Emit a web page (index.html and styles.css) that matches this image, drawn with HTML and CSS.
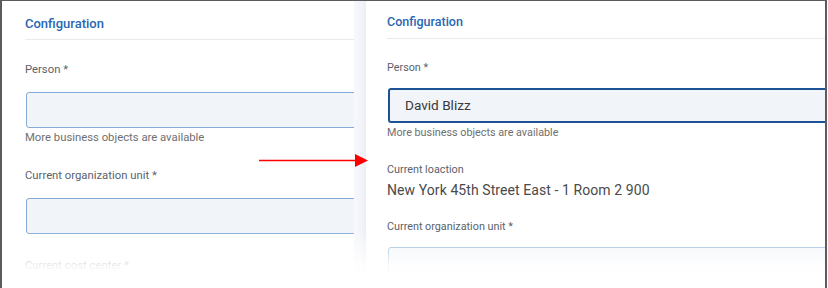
FILE: index.html
```html
<!DOCTYPE html>
<html lang="en">
<head>
<meta charset="utf-8">
<title>Configuration</title>
<link rel="stylesheet" href="styles.css">
</head>
<body>
<div class="frame">
  <section class="panel panel-left">
    <h2 class="title">Configuration</h2>
    <div class="field">
      <label class="label">Person *</label>
      <div class="input"></div>
      <div class="help">More business objects are available</div>
    </div>
    <div class="field">
      <label class="label">Current organization unit *</label>
      <div class="input"></div>
    </div>
    <div class="field">
      <label class="label">Current cost center *</label>
    </div>
  </section>
  <div class="gutter"></div>
  <section class="panel panel-right">
    <h2 class="title">Configuration</h2>
    <div class="field">
      <label class="label">Person *</label>
      <div class="input input-focus">David Blizz</div>
      <div class="help">More business objects are available</div>
    </div>
    <div class="field">
      <label class="label">Current loaction</label>
      <div class="value">New York 45th Street East - 1 Room 2 900</div>
    </div>
    <div class="field">
      <label class="label">Current organization unit *</label>
      <div class="input"></div>
    </div>
  </section>
  <div class="fade"></div>
  <svg class="arrow" width="110" height="14" viewBox="0 0 110 14">
    <line x1="0" y1="6.5" x2="98" y2="6.5" stroke="#ff0000" stroke-width="1.4"/>
    <polygon points="96,0 109,6.5 96,13" fill="#ff0000"/>
  </svg>
</div>
</body>
</html>
```
FILE: styles.css
```css
* { box-sizing: border-box; }
html, body { margin: 0; padding: 0; background: #ffffff; }
body { font-family: Roboto, "Liberation Sans", Arial, sans-serif; }

.frame {
  position: relative;
  display: flex;
  width: 827px;
  height: 288px;
  border-top: 1px solid #5b5b5b;
  border-left: 2px solid #5b5b5b;
  border-right: 2px solid #5b5b5b;
  overflow: hidden;
  background: #ffffff;
}

.panel {
  overflow: hidden;
  background: #ffffff;
}

.panel-left {
  width: 352px;
  flex: none;
  padding: 15px 0 0 23px;
}

.gutter {
  width: 12px;
  flex: none;
  background: linear-gradient(to right, #f7f8fc 0%, #f3f4fa 60%, #eceef6 100%);
}

.panel-right {
  flex: 1;
  padding: 13px 0 0 21px;
}

.title {
  margin: 0;
  font-size: 13px;
  line-height: 16px;
  font-weight: 500;
  color: #2867b2;
  padding-bottom: 7px;
  border-bottom: 1px solid #eaeaea;
}

.panel-left .field { margin-top: 22px; }
.panel-left .field:nth-of-type(3) { margin-top: 24px; }

.label {
  display: block;
  font-size: 11.3px;
  line-height: 16px;
  color: #5a626b;
}

.input {
  margin-top: 14px;
  height: 36px;
  width: calc(100% + 20px);
  margin-left: 1px;
  background: #f1f4f9;
  border: 1px solid #86abd6;
  border-radius: 3px;
}

.help {
  margin-top: 2px;
  font-size: 11.3px;
  line-height: 16px;
  color: #6f6f6f;
}

/* right panel, slightly smaller scale */
.panel-right .title {
  font-size: 12.5px;
  line-height: 16px;
  padding-bottom: 8px;
}
.panel-right .field { margin-top: 21px; }
.panel-right .field:nth-of-type(2) { margin-top: 22px; }
.panel-right .field:nth-of-type(3) { margin-top: 20px; }

.panel-right .label {
  font-size: 10.8px;
  line-height: 15px;
}

.panel-right .input {
  margin-top: 13px;
  height: 35px;
}

.panel-right .input-focus {
  border: 2px solid #1d5394;
  padding-left: 15px;
  font-size: 13.6px;
  line-height: 31px;
  color: #3a3a3a;
}

.panel-right .help {
  font-size: 10.8px;
  line-height: 15px;
}

.value {
  margin-top: 4px;
  font-size: 14px;
  line-height: 18px;
  color: #4a4a4a;
  letter-spacing: 0.08px;
}

.fade {
  position: absolute;
  left: 0;
  right: 0;
  bottom: 0;
  height: 58px;
  background: linear-gradient(to bottom, rgba(255,255,255,0) 0%, rgba(255,255,255,0.9) 62%, #ffffff 80%);
  pointer-events: none;
}

.arrow {
  position: absolute;
  left: 257px;
  top: 153px;
}
```
